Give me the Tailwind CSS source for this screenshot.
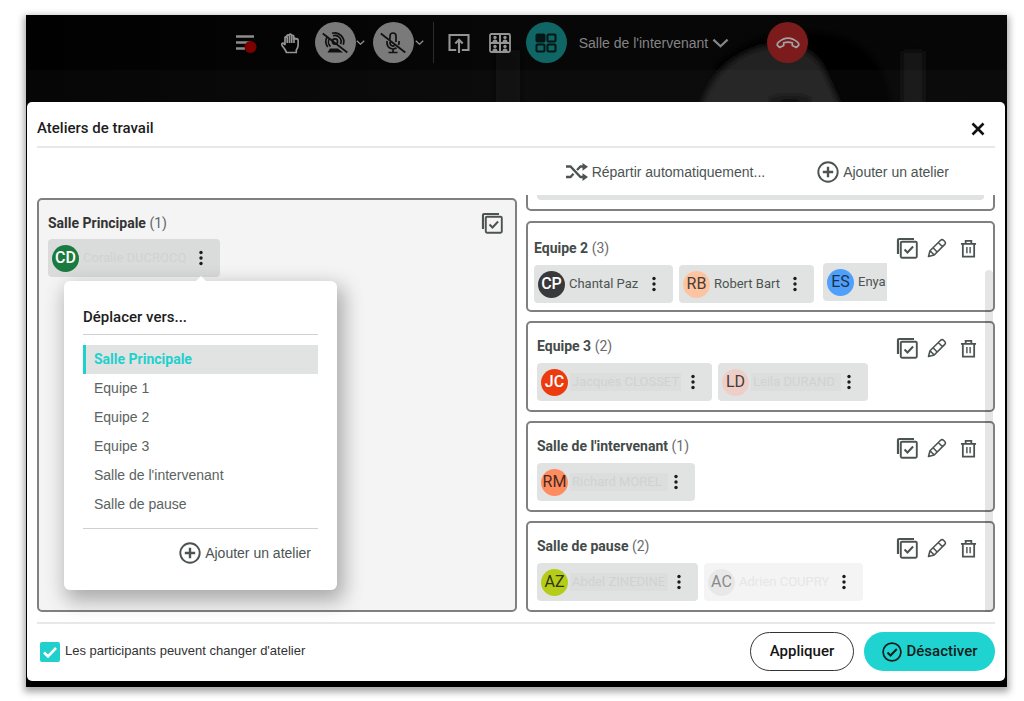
<!DOCTYPE html>
<html lang="fr">
<head>
<meta charset="utf-8">
<meta name="viewport" content="width=device-width, initial-scale=1">
<title>Ateliers de travail</title>
<script src="https://cdn.jsdelivr.net/npm/@tailwindcss/browser@4"></script>
</head>
<body class="bg-white font-[Roboto,sans-serif] text-sm text-[#4b5452]">
<svg class="hidden" aria-hidden="true">
  <symbol id="select-all" viewBox="0 0 22 22"><g fill="none" stroke="currentColor"><path d="M2 17V3.200Q2 2 3.200 2H18" stroke-width="2.200"/><rect x="4.800" y="4.800" width="16" height="16" rx="1.200" stroke-width="1.900"/><path d="m8.500 12.500 3 3 5.600-6" stroke-width="2"/></g></symbol>
  <symbol id="pencil" viewBox="0 0 20 20"><g fill="none" stroke="currentColor" stroke-width="1.600" stroke-linejoin="round"><path d="M1.500 18.500 3 12.800 13.600 2.200a2 2 0 0 1 2.900 0l1.300 1.300a2 2 0 0 1 0 2.900L7.200 17ZM3 12.800l4.200 4.200M11.300 4.500l4.200 4.200M6 9.800l4.200 4.200"/></g></symbol>
  <symbol id="trash" viewBox="0 0 18 20"><g fill="none" stroke="currentColor" stroke-width="1.900"><path d="M1 5h16M3 5v13.500h12V5M6 5V2h6v3"/><path d="M7.300 8.500v6.500M10.700 8.500v6.500" stroke-width="1.500"/></g></symbol>
  <symbol id="plus" viewBox="0 0 22 22"><circle cx="11" cy="11" r="9.700" fill="none" stroke="currentColor" stroke-width="1.900"/><path d="M11 5.800v10.400M5.800 11h10.400" stroke="currentColor" stroke-width="2.400"/></symbol>
  <symbol id="dots" viewBox="0 0 4 16"><g fill="#1b1b1b"><circle cx="2" cy="2.500" r="1.700"/><circle cx="2" cy="8" r="1.700"/><circle cx="2" cy="13.500" r="1.700"/></g></symbol>
  <symbol id="chevron" viewBox="0 0 18 10"><path d="m1.500 1.500 7.500 7 7.500-7" fill="none" stroke="currentColor" stroke-width="2.400"/></symbol>
</svg>

<div class="pt-[15px] pr-[17px] pb-[14px] pl-[26px]">
  <div class="relative bg-black pb-[6px] shadow-[0_3px_7px_2px_rgba(0,0,0,0.35)]">
    <svg class="absolute top-0 left-0 h-[90px] w-full" viewBox="0 0 981 90" preserveAspectRatio="none" aria-hidden="true">
      <defs>
        <filter id="soft" filterUnits="userSpaceOnUse" x="0" y="-20" width="981" height="130"><feGaussianBlur stdDeviation="3"/></filter>
        <linearGradient id="wall"><stop offset="0" stop-color="#010101"/><stop offset=".5" stop-color="#070707"/><stop offset="1" stop-color="#060606"/></linearGradient>
      </defs>
      <rect width="981" height="90" fill="url(#wall)"/>
      <g filter="url(#soft)">
        <path d="M690 50Q740 8 800 18T866 95H690Z" fill="#020202"/>
        <path d="M672 100Q685 50 730 34Q775 22 795 50L818 100Z" fill="#242424"/>
        <ellipse cx="764" cy="86" rx="22" ry="5" fill="#0b0b0b"/>
        <path d="M876 36h22v70h-22z" fill="#171717"/>
        <path d="M470 35h24v70h-24z" fill="#111"/>
      </g>
      <rect y="55" width="981" height="35" fill="#fff" opacity=".025"/>
    </svg>

    <header class="relative flex h-[87px] items-start justify-center pt-[7px] pl-[10px] text-[#949494]">
      <button aria-label="Liste et enregistrement" class="flex h-[41px] w-[22px] items-center"><svg class="h-5 w-[22px]" viewBox="0 0 22 20"><path d="M1 3.500h18M1 9.500h14M1 15.500h9" stroke="#8c8c8c" stroke-width="2.400"/><circle cx="15.500" cy="14" r="6" fill="#7d0000"/></svg></button>
      <button aria-label="Lever la main" class="ml-[23px] flex h-[41px] w-5 items-center"><svg class="h-[22px] w-5" viewBox="0 0 20 22"><path d="M6.500 20.500 5 17.500 2 13.500Q1.200 11.500 3 11l2 1.500V5.500q.9-1.700 2 0V3.800q1-1.700 2.200 0V3q1-1.700 2.300 0v1q1-1.500 2.200 0v3q1.200-1.500 2.400.2 1.300-1.200 2 .5V13q0 3-1.800 5v2.500ZM7.200 5v6M9.500 4v7M11.700 4v7M14 6v5" fill="none" stroke="currentColor" stroke-width="1.700" stroke-linejoin="round"/></svg></button>
      <button aria-label="Activer la caméra" class="ml-[15px] flex size-[41px] items-center justify-center rounded-full bg-[#7a7a7a] text-[#101010]"><svg class="size-[26px]" viewBox="0 0 26 26"><g fill="none" stroke="currentColor" stroke-width="1.700"><circle cx="13" cy="11.500" r="2.600"/><path d="M8.500 16.500a6.200 6.200 0 0 1-1-8M11 5.700a6.200 6.200 0 0 1 7.500 8.500M5.800 17a9 9 0 0 1-.7-10M10 3.300a9 9 0 0 1 11.300 11.500M.8 3.500l24.500 19"/></g><path d="M5.500 22.500 8 18.500h8l5 4Z" fill="currentColor"/></svg></button>
      <button aria-label="Options de la caméra" class="flex h-[41px] w-[10px] items-center justify-center"><svg class="h-[5px] w-[9px]"><use href="#chevron"/></svg></button>
      <button aria-label="Activer le micro" class="ml-[7px] flex size-[41px] items-center justify-center rounded-full bg-[#7a7a7a] text-[#101010]"><svg class="size-[26px]" viewBox="0 0 26 26"><g fill="none" stroke="currentColor" stroke-width="1.700"><path d="M10 9.500V6a3 3 0 0 1 6 0v6M10 12v1a3 3 0 0 0 4.500 2.600M7 11v2a6 6 0 0 0 9.500 4.800M19 11v2.500l-.5 1.500M13 19v3.500M8.500 22.500h9M.8 3.500l24.500 19"/></g></svg></button>
      <button aria-label="Options du micro" class="ml-px flex h-[41px] w-[10px] items-center justify-center"><svg class="h-[5px] w-[9px]"><use href="#chevron"/></svg></button>
      <span class="ml-[8px] h-[41px] w-px bg-[#2b2b2b]"></span>
      <button aria-label="Partager" class="ml-[14px] flex h-[41px] w-[22px] items-center"><svg class="size-[22px]" viewBox="0 0 22 22"><path d="M8.200 18H1.500V3h19v15h-6.700M11 21V8M7.300 11.500 11 7.800l3.700 3.700" fill="none" stroke="currentColor" stroke-width="2.100"/></svg></button>
      <button aria-label="Disposition" class="ml-[19px] flex h-[41px] w-[22px] items-center"><svg class="h-5 w-[22px]" viewBox="0 0 22 20"><rect x="1" y="1" width="20" height="18" rx="1.500" fill="none" stroke="currentColor" stroke-width="1.800"/><path d="M11 1v18M1 10h20" stroke="currentColor" stroke-width="2"/><g fill="currentColor"><circle cx="6" cy="4.500" r="1.700"/><circle cx="16" cy="4.500" r="1.700"/><circle cx="6" cy="13.500" r="1.700"/><circle cx="16" cy="13.500" r="1.700"/><path d="M3.500 9q0-2.500 2.500-2.500T8.500 9ZM13.500 9q0-2.500 2.500-2.500T18.500 9ZM3.500 18q0-2.500 2.500-2.500t2.500 2.500ZM13.500 18q0-2.500 2.500-2.500t2.500 2.500Z"/></g></svg></button>
      <button aria-label="Ateliers" class="ml-[15px] flex size-[41px] items-center justify-center rounded-full bg-[#0f6664] text-[#051616]"><svg class="h-5 w-[22px]" viewBox="0 0 22 20"><g fill="none" stroke="currentColor" stroke-width="2"><rect x="1.500" y="1.500" width="8" height="7" rx="1" fill="currentColor"/><rect x="12.500" y="1.500" width="8" height="7" rx="1"/><rect x="1.500" y="11.500" width="8" height="7" rx="1"/><rect x="12.500" y="11.500" width="8" height="7" rx="1"/></g></svg></button>
      <button class="ml-[12px] flex h-[41px] items-center gap-[4px] font-['Liberation_Sans',sans-serif] whitespace-nowrap text-[#848484]">Salle de l'intervenant <svg class="h-[10px] w-[17px]"><use href="#chevron"/></svg></button>
      <button aria-label="Raccrocher" class="ml-[38px] flex size-[41px] items-center justify-center rounded-full bg-[#7c1b1b] text-[#a3a3a3]"><svg class="h-3 w-6" viewBox="0 0 24 12"><path d="M1.200 8.200Q1 6.500 2.500 5.200 12-2.800 21.500 5.200q1.500 1.300 1.300 3l-2.500 2.300-4-2V5.800Q12 4.300 7.700 5.800v2.700l-4 2Z" fill="none" stroke="currentColor" stroke-width="1.700" stroke-linejoin="round"/></svg></button>
    </header>

    <main role="dialog" aria-labelledby="dialog-title" class="relative mr-[2px] ml-px rounded-[5px] bg-white px-[10px] pb-[10px]">
      <div class="flex h-[46px] items-center justify-between border-b-2 border-[#e8e8e8] pt-[10px] pr-[10px]">
        <h1 id="dialog-title" class="text-[15px] font-medium text-[#1d1d1d]">Ateliers de travail</h1>
        <button aria-label="Fermer"><svg class="size-[14px]" viewBox="0 0 14 14"><path d="m1.500 1.500 11 11M12.500 1.500l-11 11" stroke="#111" stroke-width="2.600"/></svg></button>
      </div>
      <div class="flex h-[47px] items-center justify-end gap-[52px] pr-[46px] font-['Liberation_Sans',sans-serif]">
        <button class="flex items-center gap-[4px]"><svg class="h-[18px] w-[22px]" viewBox="0 0 22 18"><path d="M0 3.500h4.500L14.500 14h3M0 14h4.500l3-3.200M11 7l3.500-3.500h3" fill="none" stroke="currentColor" stroke-width="2.300"/><path d="M16.500 0 22 3.800l-5.500 3.900ZM16.500 10.300 22 14.100 16.500 18Z" fill="currentColor"/></svg>Répartir automatiquement...</button>
        <button class="flex items-center gap-[4px]"><svg class="size-[22px]"><use href="#plus"/></svg>Ajouter un atelier</button>
      </div>

      <div class="grid grid-cols-[480fr_469fr] gap-[9px]">
        <section class="relative mt-[3px] rounded-[5px] border-2 border-[#808080] bg-[#f4f4f4] px-[9px] pt-[12px]">
          <div class="flex items-center justify-between pr-[3px]">
            <h2 class="font-bold text-[#333]">Salle Principale <span class="font-normal text-[#666]">(1)</span></h2>
            <button aria-label="Tout sélectionner dans Salle Principale"><svg class="size-[22px]"><use href="#select-all"/></svg></button>
          </div>
          <div class="mt-[5px] flex h-[38px] w-[172px] items-center rounded-[4px] bg-[#dadcdb] pr-[17px] pl-[4px] text-[13px]">
            <span class="flex size-[27px] shrink-0 items-center justify-center rounded-full bg-[#1b7a40] text-base font-medium text-white">CD</span>
            <span class="ml-[4px] grow text-[#d0d2d1]">Coralie DUCROCQ</span>
            <button aria-label="Options de Coralie DUCROCQ"><svg class="h-4 w-1"><use href="#dots"/></svg></button>
          </div>

          <div role="menu" class="absolute top-[81px] left-[25px] w-[273px] rounded-[6px] bg-white px-[19px] pt-[25px] pb-[26px] shadow-[4px_8px_20px_3px_rgba(0,0,0,0.3)]">
            <svg class="absolute -top-[6px] left-[131px] h-[7px] w-3" viewBox="0 0 12 7"><path d="m0 7 6-6 6 6Z" fill="#fff"/></svg>
            <h3 class="border-b border-[#d0d0d0] pb-[6px] text-[15px] leading-[22px] font-medium text-[#1d1d1d]">Déplacer vers...</h3>
            <div class="mt-[10px] flex flex-col font-['Liberation_Sans',sans-serif] leading-[29px] text-[#5b6361]">
              <button role="menuitem" class="border-l-[3px] border-[#1fd0cd] bg-[#e1e3e2] pl-[8px] text-left font-[Roboto,sans-serif] font-bold text-[#1fd0cd]">Salle Principale</button>
              <button role="menuitem" class="pl-[11px] text-left">Equipe 1</button>
              <button role="menuitem" class="pl-[11px] text-left">Equipe 2</button>
              <button role="menuitem" class="pl-[11px] text-left">Equipe 3</button>
              <button role="menuitem" class="pl-[11px] text-left">Salle de l'intervenant</button>
              <button role="menuitem" class="pl-[11px] text-left">Salle de pause</button>
            </div>
            <div class="mt-[9px] flex justify-end border-t border-[#d0d0d0] pt-[13px] pr-[7px]">
              <button class="flex items-center gap-[4px] font-['Liberation_Sans',sans-serif]"><svg class="size-[22px]"><use href="#plus"/></svg>Ajouter un atelier</button>
            </div>
          </div>
        </section>

        <div class="relative flex flex-col gap-[9px] overflow-hidden">
          <section class="-mt-[5px] mb-px h-[21px] rounded-[5px] border-2 border-[#808080] px-[9px]"><div class="h-[8px] rounded-b-[4px] bg-[#e1e3e2]"></div></section>

          <section class="flex justify-between rounded-[5px] border-2 border-[#808080] pt-[15px] pr-[16px] pb-[7px] pl-[6px]">
            <div class="min-w-0">
              <h2 class="leading-5 font-bold text-[#444b49]">Equipe 2 <span class="font-normal text-[#6b6b6b]">(3)</span></h2>
              <div class="mt-[5px] flex w-[353px] items-start gap-[6px] overflow-hidden text-[13px] whitespace-nowrap">
                <div class="mt-[2px] flex h-[38px] w-[139px] shrink-0 items-center rounded-[4px] bg-[#e1e3e2] pr-[17px] pl-[4px]"><span class="flex size-[27px] shrink-0 items-center justify-center rounded-full bg-[#39383d] text-base font-medium text-white">CP</span><span class="ml-[4px] grow">Chantal Paz</span><button aria-label="Options de Chantal Paz"><svg class="h-4 w-1"><use href="#dots"/></svg></button></div>
                <div class="mt-[2px] flex h-[38px] w-[135px] shrink-0 items-center rounded-[4px] bg-[#e1e3e2] pr-[17px] pl-[4px]"><span class="flex size-[27px] shrink-0 items-center justify-center rounded-full bg-[#fdc4a2] text-base text-[#4a3b33]">RB</span><span class="ml-[4px] grow">Robert Bart</span><button aria-label="Options de Robert Bart"><svg class="h-4 w-1"><use href="#dots"/></svg></button></div>
                <div class="ml-[3px] flex h-[38px] w-[135px] shrink-0 items-center rounded-[4px] bg-[#e1e3e2] pl-[4px]"><span class="flex size-[27px] shrink-0 items-center justify-center rounded-full bg-[#509ffb] text-base text-[#17324f]">ES</span><span class="ml-[4px]">Enya</span></div>
              </div>
            </div>
            <div class="-mt-px flex h-[22px] items-center"><button aria-label="Tout sélectionner dans Equipe 2"><svg class="size-[22px]"><use href="#select-all"/></svg></button><button aria-label="Renommer Equipe 2" class="ml-[9px]"><svg class="size-5"><use href="#pencil"/></svg></button><button aria-label="Supprimer Equipe 2" class="ml-[13px]"><svg class="h-[19px] w-[17px]"><use href="#trash"/></svg></button></div>
          </section>

          <section class="flex justify-between rounded-[5px] border-2 border-[#808080] pt-[13px] pr-[16px] pb-[9px] pl-[9px]">
            <div>
              <h2 class="leading-5 font-bold text-[#444b49]">Equipe 3 <span class="font-normal text-[#6b6b6b]">(2)</span></h2>
              <div class="mt-[7px] flex gap-[6px] text-[13px] whitespace-nowrap">
                <div class="flex h-[38px] w-[175px] items-center rounded-[4px] bg-[#e1e3e2] pr-[17px] pl-[4px]"><span class="flex size-[27px] shrink-0 items-center justify-center rounded-full bg-[#ec3b0f] text-base font-medium text-white">JC</span><span class="ml-[2px] w-[111px] bg-[#dcdedd] pl-[2px] text-[#d0d2d1]">Jacques CLOSSET</span><button aria-label="Options de Jacques CLOSSET" class="ml-auto"><svg class="h-4 w-1"><use href="#dots"/></svg></button></div>
                <div class="flex h-[38px] w-[150px] items-center rounded-[4px] bg-[#e1e3e2] pr-[17px] pl-[4px]"><span class="flex size-[27px] shrink-0 items-center justify-center rounded-full bg-[#eecfc8] text-base text-[#453c3a]">LD</span><span class="ml-[2px] w-[90px] bg-[#dcdedd] pl-[2px] text-[#d0d2d1]">Leila DURAND</span><button aria-label="Options de Leila DURAND" class="ml-auto"><svg class="h-4 w-1"><use href="#dots"/></svg></button></div>
              </div>
            </div>
            <div class="mt-px flex h-[22px] items-center"><button aria-label="Tout sélectionner dans Equipe 3"><svg class="size-[22px]"><use href="#select-all"/></svg></button><button aria-label="Renommer Equipe 3" class="ml-[9px]"><svg class="size-5"><use href="#pencil"/></svg></button><button aria-label="Supprimer Equipe 3" class="ml-[13px]"><svg class="h-[19px] w-[17px]"><use href="#trash"/></svg></button></div>
          </section>

          <section class="flex justify-between rounded-[5px] border-2 border-[#808080] pt-[13px] pr-[16px] pb-[9px] pl-[9px]">
            <div>
              <h2 class="leading-5 font-bold text-[#444b49]">Salle de l'intervenant <span class="font-normal text-[#6b6b6b]">(1)</span></h2>
              <div class="mt-[7px] flex gap-[6px] text-[13px] whitespace-nowrap">
                <div class="flex h-[38px] w-[158px] items-center rounded-[4px] bg-[#e1e3e2] pr-[17px] pl-[4px]"><span class="flex size-[27px] shrink-0 items-center justify-center rounded-full bg-[#ff8c61] text-base text-[#4a281b]">RM</span><span class="ml-[2px] w-[98px] bg-[#dcdedd] pl-[2px] text-[#d0d2d1]">Richard MOREL</span><button aria-label="Options de Richard MOREL" class="ml-auto"><svg class="h-4 w-1"><use href="#dots"/></svg></button></div>
              </div>
            </div>
            <div class="mt-px flex h-[22px] items-center"><button aria-label="Tout sélectionner dans Salle de l'intervenant"><svg class="size-[22px]"><use href="#select-all"/></svg></button><button aria-label="Renommer Salle de l'intervenant" class="ml-[9px]"><svg class="size-5"><use href="#pencil"/></svg></button><button aria-label="Supprimer Salle de l'intervenant" class="ml-[13px]"><svg class="h-[19px] w-[17px]"><use href="#trash"/></svg></button></div>
          </section>

          <section class="flex justify-between rounded-[5px] border-2 border-[#808080] pt-[13px] pr-[16px] pb-[9px] pl-[9px]">
            <div>
              <h2 class="leading-5 font-bold text-[#444b49]">Salle de pause <span class="font-normal text-[#6b6b6b]">(2)</span></h2>
              <div class="mt-[7px] flex gap-[6px] text-[13px] whitespace-nowrap">
                <div class="flex h-[38px] w-[161px] items-center rounded-[4px] bg-[#e1e3e2] pr-[17px] pl-[4px]"><span class="flex size-[27px] shrink-0 items-center justify-center rounded-full bg-[#b5cc18] text-base text-[#2f350b]">AZ</span><span class="ml-[2px] w-[98px] bg-[#dcdedd] pl-[2px] text-[#d0d2d1]">Abdel ZINEDINE</span><button aria-label="Options de Abdel ZINEDINE" class="ml-auto"><svg class="h-4 w-1"><use href="#dots"/></svg></button></div>
                <div class="flex h-[38px] w-[159px] items-center rounded-[4px] bg-[#f4f4f4] pr-[17px] pl-[4px]"><span class="flex size-[27px] shrink-0 items-center justify-center rounded-full bg-[#e8e8e8] text-base text-[#8a8a8a]">AC</span><span class="ml-[4px] text-[#e6e6e6]">Adrien COUPRY</span><button aria-label="Options de Adrien COUPRY" class="ml-auto"><svg class="h-4 w-1"><use href="#dots"/></svg></button></div>
              </div>
            </div>
            <div class="mt-px flex h-[22px] items-center"><button aria-label="Tout sélectionner dans Salle de pause"><svg class="size-[22px]"><use href="#select-all"/></svg></button><button aria-label="Renommer Salle de pause" class="ml-[9px]"><svg class="size-5"><use href="#pencil"/></svg></button><button aria-label="Supprimer Salle de pause" class="ml-[13px]"><svg class="h-[19px] w-[17px]"><use href="#trash"/></svg></button></div>
          </section>
          <div class="absolute top-[75px] right-[2px] bottom-0 w-[8px] rounded-t-[4px] bg-black/10"></div>
        </div>
      </div>

      <footer class="mt-[10px] flex items-center gap-[10px] border-t-2 border-[#e8e8e8] pt-[8px]">
        <label class="mr-auto flex items-center gap-[5px] pl-[3px] font-['Liberation_Sans',sans-serif] text-[13px] text-[#333]">
          <span class="grid"><input type="checkbox" checked class="col-start-1 row-start-1 size-5 appearance-none rounded-[2px] bg-[#1fd0cd]"><svg class="pointer-events-none col-start-1 row-start-1 size-5" viewBox="0 0 20 20"><path d="m4 10.500 4 4 8-8.500" fill="none" stroke="#fff" stroke-width="2.600"/></svg></span>
          Les participants peuvent changer d'atelier
        </label>
        <button class="h-[39px] w-[104px] rounded-full border border-[#333] text-[15px] font-medium text-[#151515]">Appliquer</button>
        <button class="flex h-[39px] w-[131px] items-center justify-center gap-[5px] rounded-full bg-[#1fd4d0] text-[15px] font-medium text-[#101c1c]"><svg class="size-5" viewBox="0 0 20 20"><g fill="none" stroke="currentColor"><circle cx="10" cy="10" r="8.900" stroke-width="1.700"/><path d="m5.500 10.500 3 3 6.300-6.500" stroke-width="2"/></g></svg>Désactiver</button>
      </footer>
    </main>
  </div>
</div>
</body>
</html>
